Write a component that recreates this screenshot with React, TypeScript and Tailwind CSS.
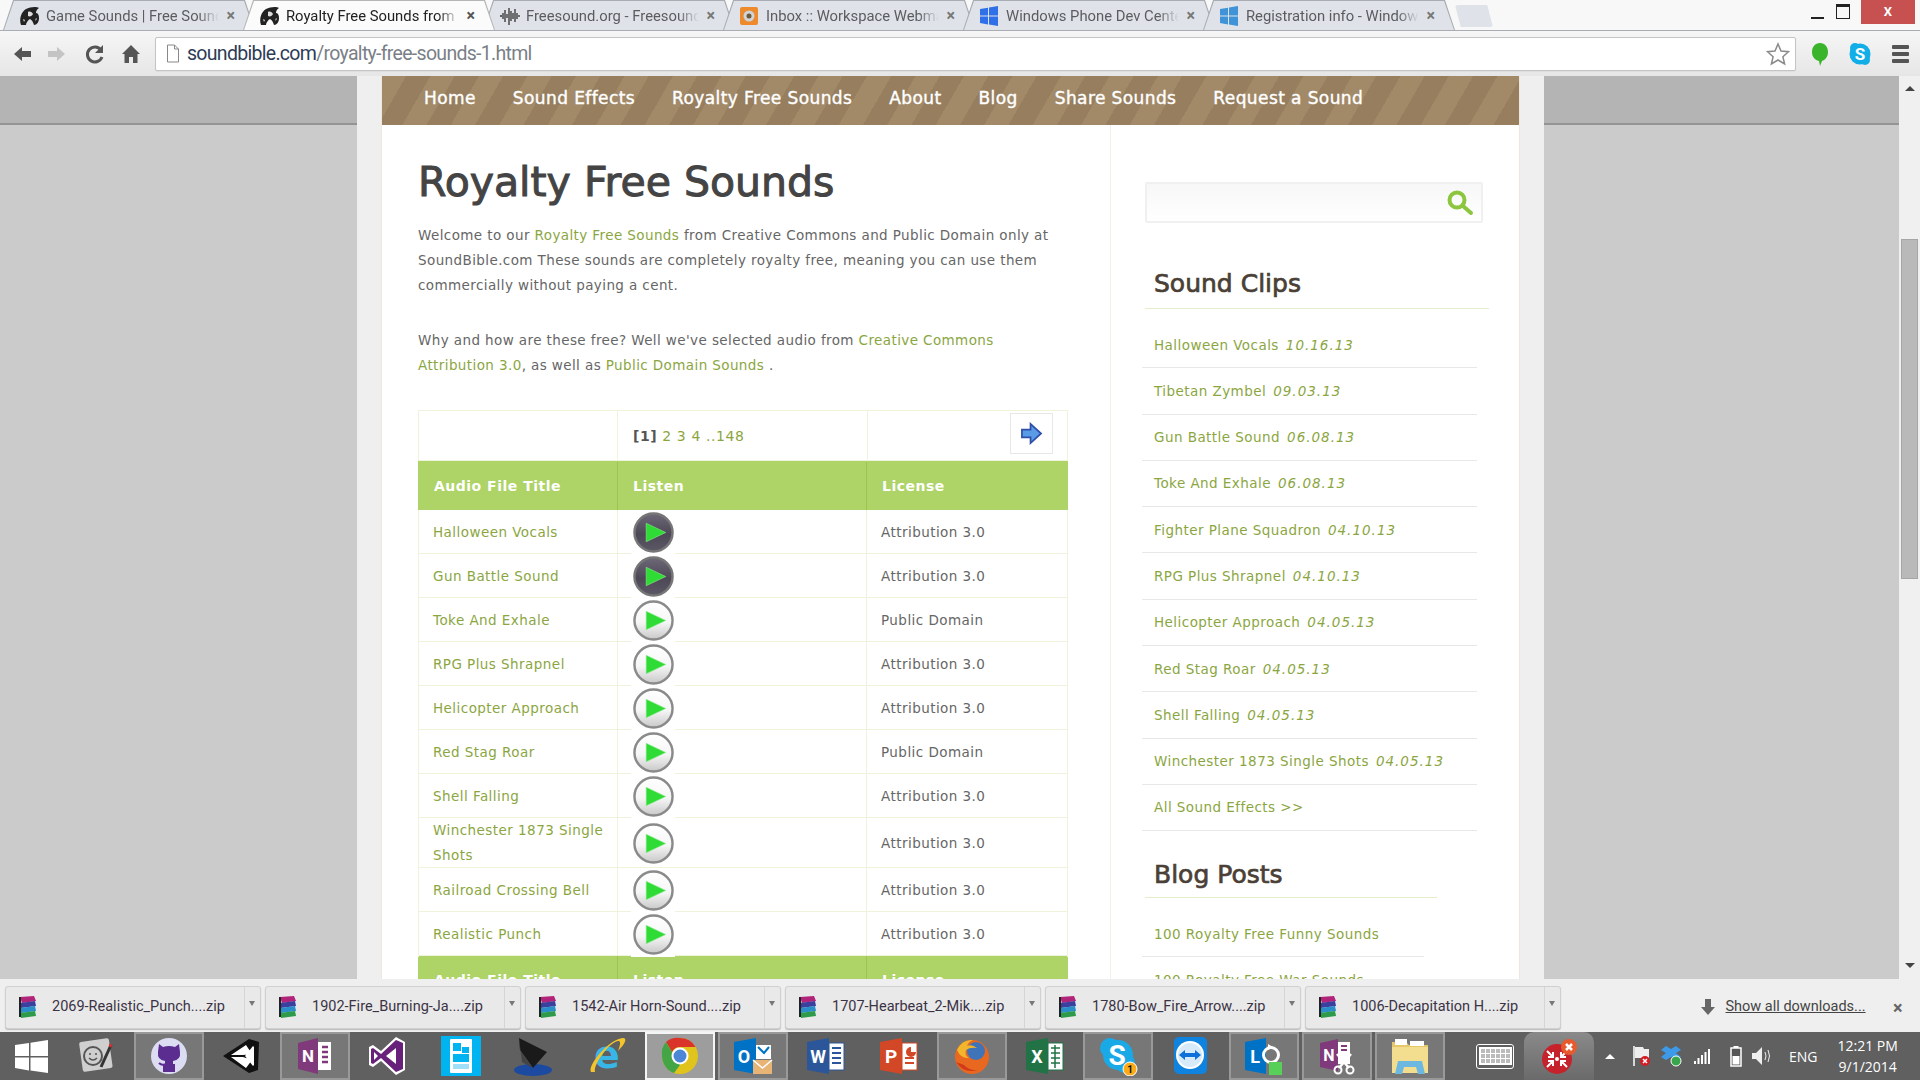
import React from "react";

const tabs = [
  { t: "Game Sounds | Free Sounds", ic: "sb" },
  { t: "Royalty Free Sounds from", ic: "sb", active: true },
  { t: "Freesound.org - Freesound", ic: "wave" },
  { t: "Inbox :: Workspace Webmail", ic: "mail" },
  { t: "Windows Phone Dev Center", ic: "win" },
  { t: "Registration info - Windows", ic: "win2" },
];

function TabIcon({ k }: { k: string }) {
  if (k === "sb")
    return (
      <svg width="22" height="22" viewBox="0 0 22 20">
        <path d="M2 19C0 13 2 6 7 3c4-2 10-3 13-1-2 1-3 3-3 5 2 0 3 2 3 5 0 4-2 7-5 7-1-3-2-5-4-6-2 1-4 4-4 6z" fill="#222" />
        <path d="M9 6c2-1 4 0 5 2-1 2-3 3-5 2zM4 13l2 1-1 2zM17 12l1 1-2 2z" fill="#ddd" />
      </svg>
    );
  if (k === "wave")
    return (
      <svg width="22" height="20" viewBox="0 0 22 20" stroke="#333" strokeWidth="1.3" fill="none">
        <path d="M1 10h2M4 7v6M6 4v12M8 8v4M10 2v17M12 5v10M14 7v6M16 3v13M18 7v6M20 9v2" />
      </svg>
    );
  if (k === "mail")
    return (
      <svg width="20" height="20" viewBox="0 0 20 20">
        <rect x="1" y="1" width="18" height="18" rx="2" fill="#ec8a2c" />
        <circle cx="10" cy="10" r="5.5" fill="#cfd3da" />
        <circle cx="10" cy="10" r="2.5" fill="#6b5a3a" />
      </svg>
    );
  const c = k === "win" ? "#2f6fe8" : "#3f93d6";
  return (
    <svg width="20" height="20" viewBox="0 0 20 20" fill={c}>
      <path d="M1 3l8-1.300V9.500H1zM10 1.500L19 0v9.500H10zM1 10.500h8v8L1 17zM10 10.500h9V20l-9-1.500z" />
    </svg>
  );
}

function Tab({ t, ic, active }: { t: string; ic: string; active?: boolean }) {
  return (
    <div className={`relative h-[30px] w-[252px] -mr-[12px] ${active ? "z-10" : ""}`}>
      <div className={`absolute inset-0 [clip-path:polygon(0_100%,10px_0,242px_0,252px_100%)] ${active ? "bg-[#b5b5b5]" : "bg-[#a9adb3]"}`}>
        <div className={`absolute inset-x-px top-px bottom-0 [clip-path:polygon(0_100%,10px_0,240px_0,250px_100%)] ${active ? "bg-[#fbfbfb]" : "bg-[#dfe3e9]"}`} />
      </div>
      <div className="relative flex h-[30px] items-center pl-[16px] pr-[20px] pt-[2px]">
        <span className="flex w-[27px] shrink-0"><TabIcon k={ic} /></span>
        <span className={`min-w-0 flex-1 overflow-hidden whitespace-nowrap text-[14.800px] [mask-image:linear-gradient(to_right,black_88%,transparent)] ${active ? "text-[#222]" : "text-[#5c5c60]"}`}>{t}</span>
        <span className={`ml-[8px] text-[16px] font-bold ${active ? "text-[#555]" : "text-[#777]"}`}>×</span>
      </div>
    </div>
  );
}

function TabStrip() {
  return (
    <div className="relative flex h-[31px] items-end bg-[#f8f8f8] pl-[3px] font-['Roboto',sans-serif] border-b border-[#a9adb3]">
      {tabs.map((x) => <Tab key={x.t} t={x.t} ic={x.ic} active={x.active} />)}
      <div className="ml-[12px] mb-[3px] h-[22px] w-[38px] rounded-[3px] bg-[#dfe3e9] [clip-path:polygon(0_0,85%_0,100%_100%,15%_100%)]" />
      <div className="ml-auto flex h-[24px] self-start">
        <div className="flex w-[33px] items-end justify-center pb-[5px]"><div className="h-[2px] w-[13px] bg-[#222]" /></div>
        <div className="flex w-[17px] items-start justify-center pt-[4px]">
          <div className="h-[15px] w-[14px] border border-[#222] border-t-[3px]" />
        </div>
        <div className="ml-[10px] mr-[5px] flex w-[54px] items-center justify-center bg-[#c75050] text-[13px] font-bold text-white">X</div>
      </div>
    </div>
  );
}

function Toolbar() {
  return (
    <div className="flex h-[45px] items-center bg-[linear-gradient(#f6f6f6,#e6e6e6)] font-['Roboto',sans-serif]">
      <div className="flex w-[155px] shrink-0 items-center pl-[11px]">
        <svg width="144" height="22" viewBox="0 0 144 22">
          <path d="M3 11l8-7v4h9v6h-9v4z" fill="#555" />
          <path d="M54 11l-8-7v4h-9v6h9v4z" fill="#c4c4c4" />
          <path d="M90 7a7.500 7.500 0 1 0 1 7" fill="none" stroke="#555" strokeWidth="3" />
          <path d="M92 2v8h-8z" fill="#555" />
          <path d="M111 11l9-9 9 9h-2.500v9H122v-6h-4v6h-4.500v-9z" fill="#555" />
        </svg>
      </div>
      <div className="flex h-[34px] w-[1641px] items-center rounded-[2px] border border-[#c4c4c4] bg-white pl-[10px] pr-[5px] shadow-[0_1px_1px_#ddd]">
        <svg width="14" height="19" viewBox="0 0 14 19" fill="#fff" stroke="#888"><path d="M1.500 1h7l4 4v13h-11zM8.500 1v4h4" /></svg>
        <span className="ml-[7px] text-[19.500px] leading-none tracking-[-0.7px] text-[#2d3b55]">soundbible.com<span className="text-[#7a7f87]">/royalty-free-sounds-1.html</span></span>
        <svg className="ml-auto" width="24" height="24" viewBox="0 0 24 24" fill="#fff" stroke="#8a8a8a" strokeWidth="1.500"><path d="M12 2l3 7 7.500.7-5.600 5 1.700 7.300L12 18l-6.600 4 1.700-7.300-5.600-5L9 9z" /></svg>
      </div>
      <svg className="ml-[14px]" width="20" height="26" viewBox="0 0 20 26"><path d="M10 2c5 0 8 4 8 9s-3 8-6 9l-2 5-1-5c-4-1-7-4-7-9s3-9 8-9z" fill="#3ab52b" /></svg>
      <svg className="ml-[18px]" width="24" height="26" viewBox="0 0 24 26">
        <circle cx="12" cy="13" r="10.500" fill="#12aee8" /><circle cx="7" cy="7" r="5" fill="#12aee8" /><circle cx="17" cy="19" r="5" fill="#12aee8" />
        <text x="12" y="19" textAnchor="middle" fontSize="17" fontWeight="700" fill="#fff" fontFamily="Roboto">S</text>
      </svg>
      <div className="ml-[20px] flex flex-col gap-[3px]">
        <div className="h-[4px] w-[17px] rounded-[1px] bg-[#555]" /><div className="h-[4px] w-[17px] rounded-[1px] bg-[#555]" /><div className="h-[4px] w-[17px] rounded-[1px] bg-[#555]" />
      </div>
    </div>
  );
}

const rows = [
  ["Halloween Vocals", "Attribution 3.0", true],
  ["Gun Battle Sound", "Attribution 3.0", true],
  ["Toke And Exhale", "Public Domain", false],
  ["RPG Plus Shrapnel", "Attribution 3.0", false],
  ["Helicopter Approach", "Attribution 3.0", false],
  ["Red Stag Roar", "Public Domain", false],
  ["Shell Falling", "Attribution 3.0", false],
  ["Winchester 1873 Single Shots", "Attribution 3.0", false],
  ["Railroad Crossing Bell", "Attribution 3.0", false],
  ["Realistic Punch", "Attribution 3.0", false],
] as const;

function Play({ dark, id }: { dark: boolean; id: string }) {
  return (
    <svg width="41" height="41" viewBox="0 0 42 42">
      <defs>
        <linearGradient id={id} x1="0" y1="0" x2="0" y2="1">
          <stop offset="0" stopColor={dark ? "#6e6878" : "#ffffff"} />
          <stop offset="0.55" stopColor={dark ? "#4d4856" : "#f6f6f6"} />
          <stop offset="1" stopColor={dark ? "#5d5866" : "#c8c8c8"} />
        </linearGradient>
      </defs>
      <circle cx="21" cy="21" r="19.500" fill={`url(#${id})`} stroke={dark ? "#767676" : "#8a8a8a"} strokeWidth="2.500" />
      <path d="M13.500 11.500l20 9.500-20 9.500z" fill="#2fdc36" stroke="#8fe88f" strokeWidth=".6" />
    </svg>
  );
}

function Table() {
  const line = "border-[#eef3dc]";
  const grid = "grid grid-cols-[200px_249px_201px]";
  return (
    <div className={`mt-[32px] w-[650px] border-t ${line}`}>
      <div className={`${grid} h-[50px] border-b ${line}`}>
        <div className={`border-l border-r ${line}`} />
        <div className="flex items-center gap-[5px] pl-[15px] pt-px text-[14px] tracking-[.6px] text-[#8ba63f]"><b className="text-[#555]">[1]</b> <span>2</span><span>3</span><span>4</span><span>..148</span></div>
        <div className={`relative border-l border-r ${line}`}>
          <div className="absolute right-[14px] top-[2px] flex h-[41px] w-[43px] items-center justify-center border border-[#e8e8e8] bg-white">
            <svg width="23" height="23" viewBox="0 0 24 24"><path d="M2 8h9V2l11 10-11 10v-6H2z" fill="#5a9be8" stroke="#2f4fa8" strokeWidth="1.800" /></svg>
          </div>
        </div>
      </div>
      <div className={`${grid} h-[49px] bg-[#aed366] pt-px text-[14px] font-bold tracking-[.5px] text-white`}>
        <div className="flex items-center border-r border-[#9cc452] pl-[16px]">Audio File Title</div>
        <div className="flex items-center border-r border-[#9cc452] pl-[15px]">Listen</div>
        <div className="flex items-center pl-[15px]">License</div>
      </div>
      {rows.map((r, i) => (
        <div key={r[0]} className={`${grid} ${r[0].length > 24 ? "h-[50px]" : "h-[44px]"} border-b ${line} text-[13.500px] tracking-[.45px]`}>
          <div className={`flex items-center border-l border-r ${line} pl-[14px] pr-[10px] leading-[25px] text-[#8ba63f]`}>{r[0]}</div>
          <div className={`flex items-center border-r ${line} pl-[13px]`}>
            <div className="relative z-10 flex h-[45px] w-[44px] items-center justify-center bg-white"><Play dark={r[2]} id={`pg${i}`} /></div>
          </div>
          <div className={`flex items-center border-r ${line} pl-[14px] text-[#666]`}>{r[1]}</div>
        </div>
      ))}
      <div className={`${grid} h-[49px] bg-[#aed366] text-[14px] font-bold tracking-[.5px] text-white`}>
        <div className="flex items-center border-r border-[#9cc452] pl-[16px]">Audio File Title</div>
        <div className="flex items-center border-r border-[#9cc452] pl-[15px]">Listen</div>
        <div className="flex items-center pl-[15px]">License</div>
      </div>
    </div>
  );
}

const clips = [
  ["Halloween Vocals", "10.16.13"],
  ["Tibetan Zymbel", "09.03.13"],
  ["Gun Battle Sound", "06.08.13"],
  ["Toke And Exhale", "06.08.13"],
  ["Fighter Plane Squadron", "04.10.13"],
  ["RPG Plus Shrapnel", "04.10.13"],
  ["Helicopter Approach", "04.05.13"],
  ["Red Stag Roar", "04.05.13"],
  ["Shell Falling", "04.05.13"],
  ["Winchester 1873 Single Shots", "04.05.13"],
  ["All Sound Effects >>", ""],
];

function Sidebar() {
  return (
    <div className="flex-1 pl-[31px] text-[13.500px] text-[#8ba63f]">
      <div className="ml-[3px] mt-[57px] flex h-[41px] w-[338px] items-center justify-end rounded-[2px] border-2 border-[#f0f0f0] bg-[linear-gradient(#f7f7f7,#fff)] pr-[6px]">
        <svg width="30" height="28" viewBox="0 0 30 28" fill="none" stroke="#8cc63f"><circle cx="12" cy="11" r="7.500" strokeWidth="4" /><path d="M18 17l8 7" strokeWidth="4" strokeLinecap="round" /></svg>
      </div>
      <div className="ml-[3px] mt-[40px] flex h-[46px] w-[344px] items-center border-b border-[#e4efc9] pb-[3px] pl-[9px] text-[25px] text-[#4a4036] [-webkit-text-stroke:0.7px_#4a4036]">Sound Clips</div>
      <div className="mt-[13px]">
        {clips.map((c) => (
          <div key={c[0]} className="flex h-[46.300px] w-[335px] items-center border-b border-[#e8e8e8] pl-[12px]">
            <span className="tracking-[.45px]">{c[0]}</span>
            {c[1] && <i className="ml-[7px] tracking-[1px]">{c[1]}</i>}
          </div>
        ))}
      </div>
      <div className="ml-[3px] mt-[20px] flex h-[47px] w-[292px] items-center border-b border-[#e4efc9] pl-[9px] text-[25px] text-[#4a4036] [-webkit-text-stroke:0.7px_#4a4036]">Blog Posts</div>
      <div className="mt-[14px] tracking-[.45px]">
        <div className="flex h-[45px] w-[282px] items-center border-b border-[#e8e8e8] pl-[12px]">100 Royalty Free Funny Sounds</div>
        <div className="flex h-[46px] w-[282px] items-center border-b border-[#e8e8e8] pl-[12px]">100 Royalty Free War Sounds</div>
      </div>
    </div>
  );
}

function Side() {
  return (
    <div className="flex-1">
      <div className="h-[49px] border-b-2 border-[#949494] bg-[#b4b4b4]" />
    </div>
  );
}

function Page() {
  return (
    <div className="flex h-[903px] overflow-hidden bg-[#cbcbcb] font-['DejaVu_Sans',sans-serif]">
      <div className="w-[357px]"><Side /></div>
      <div className="w-[1187px] shrink-0 bg-[#f0eff0] px-[24px]">
        <div className="h-full border-x border-[#eee6e0] bg-white">
          <div className="flex h-[49px] items-center gap-[37px] bg-[repeating-linear-gradient(120deg,#a28a69_0,#a28a69_21px,#967e5e_21px,#967e5e_42px)] pb-[4px] pl-[42px] text-[17px] tracking-[.4px] text-white [-webkit-text-stroke:0.4px_#fff]">
            {["Home", "Sound Effects", "Royalty Free Sounds", "About", "Blog", "Share Sounds", "Request a Sound"].map((n) => <span key={n}>{n}</span>)}
          </div>
          <div className="flex">
            <div className="w-[729px] shrink-0 border-r border-[#f3f0ea] pl-[36px]">
              <h1 className="mt-[29px] text-[41px] font-normal leading-[56px] text-[#444] [-webkit-text-stroke:1px_#444]">Royalty Free Sounds</h1>
              <p className="mt-[13px] w-[650px] text-[13.500px] leading-[25px] tracking-[.4px] text-[#666]">
                Welcome to our <span className="text-[#8ba63f]">Royalty Free Sounds</span> from Creative Commons and Public Domain only at SoundBible.com These sounds are completely royalty free, meaning you can use them commercially without paying a cent.
              </p>
              <p className="mt-[30px] w-[650px] text-[13.500px] leading-[25px] tracking-[.4px] text-[#666]">
                Why and how are these free? Well we've selected audio from <span className="text-[#8ba63f]">Creative Commons Attribution 3.0</span>, as well as <span className="text-[#8ba63f]">Public Domain Sounds</span> .
              </p>
              <Table />
            </div>
            <Sidebar />
          </div>
        </div>
      </div>
      <div className="w-[355px]"><Side /></div>
      <div className="flex w-[21px] shrink-0 flex-col items-center bg-[#f0f0f0]">
        <div className="mt-[10px] h-0 w-0 border-x-[5px] border-b-[5px] border-x-transparent border-b-[#444]" />
        <div className="mt-[148px] h-[340px] w-[17px] border border-[#a6a6a6] bg-[#b9b9b9]" />
        <div className="mt-[384px] h-0 w-0 border-x-[5px] border-t-[5px] border-x-transparent border-t-[#444]" />
      </div>
    </div>
  );
}

const downloads = ["2069-Realistic_Punch....zip", "1902-Fire_Burning-Ja....zip", "1542-Air Horn-Sound....zip", "1707-Hearbeat_2-Mik....zip", "1780-Bow_Fire_Arrow....zip", "1006-Decapitation H....zip"];

function Rar() {
  return (
    <svg width="24" height="24" viewBox="0 0 24 24">
      <path d="M4 2l14-1 2 5-14 2z" fill="#b2247a" />
      <path d="M4 8l15-2 1 5-15 2z" fill="#3b3f9e" />
      <path d="M4 13l15-2 1 5-15 2z" fill="#2a8fc9" />
      <path d="M4 18l15-2 1 5-15 2z" fill="#2d9b4a" />
      <path d="M4 2v20" stroke="#222" strokeWidth="2" />
    </svg>
  );
}

function Downloads() {
  return (
    <div className="flex h-[53px] items-center gap-[4.500px] bg-[#efefef] pl-[5px] pt-[3px] font-['Roboto',sans-serif] text-[14.500px] text-[#3b3345]">
      {downloads.map((d) => (
        <div key={d} className="flex h-[43px] w-[255.500px] items-center rounded-[3px] border border-[#d0d0d0] bg-[#e9e9e9] shadow-[0_1px_1px_#bbb]">
          <span className="ml-[10px] mr-[12px] flex"><Rar /></span>
          <span className="flex-1 whitespace-nowrap">{d}</span>
          <div className="flex h-full w-[16px] justify-center border-l border-[#d5d5d5] pt-[14px]">
            <div className="h-0 w-0 border-x-[3.500px] border-t-[5px] border-x-transparent border-t-[#777]" />
          </div>
        </div>
      ))}
      <svg className="ml-[135px]" width="16" height="18" viewBox="0 0 16 18"><path d="M5 1h6v8h4l-7 8-7-8h4z" fill="#666" /></svg>
      <span className="ml-[5px] underline text-[14.500px] text-[#444]">Show all downloads...</span>
      <span className="ml-[23px] text-[18px] font-bold text-[#666]">×</span>
    </div>
  );
}

const T = "Roboto";
const icons: React.ReactNode[] = [
  <svg key="0" width="40" height="40" viewBox="0 0 40 40"><rect x="5" y="4" width="30" height="30" rx="2" transform="rotate(-8 20 20)" fill="#cfcfcf" /><circle cx="17" cy="20" r="9" fill="none" stroke="#555" strokeWidth="2" /><circle cx="14" cy="18" r="1" fill="#555" /><circle cx="20" cy="18" r="1" fill="#555" /><path d="M13 22q4 4 8 0" fill="none" stroke="#555" strokeWidth="1.500" /><path d="M35 9L25 31" stroke="#333" strokeWidth="3" /><path d="M34 11l1-3" stroke="#c33" strokeWidth="3" /></svg>,
  <svg key="1" width="40" height="40" viewBox="0 0 40 40"><circle cx="20" cy="20" r="18" fill="#dcdcf2" /><path d="M10 8l4 3q6-2 12 0l4-3 1 8q1 8-7 9v3h2v8h-12v-8h2v-3q-8-1-7-9z" fill="#5c2d91" /><path d="M10 27q3 3 6 1" stroke="#5c2d91" strokeWidth="2" fill="none" /></svg>,
  <svg key="2" width="40" height="40" viewBox="0 0 40 40"><path d="M1 20L27 3l10 3-1 28-9 3z" fill="#111" /><path d="M9 19L24 9l6 9-9 1zM9 21l12 0 9 3-6 8zM23 20l8-10 1 1v18l-1 1z" fill="#fff" /></svg>,
  <svg key="3" width="40" height="40" viewBox="0 0 40 40"><path d="M3 7l20-5v36L3 33z" fill="#80397b" /><rect x="23" y="6" width="13" height="28" fill="#fff" /><path d="M27 11h6M27 16h6M27 21h6M27 26h6" stroke="#80397b" strokeWidth="2.500" /><text x="13" y="26" textAnchor="middle" fontFamily={T} fontWeight="700" fontSize="17" fill="#fff">N</text></svg>,
  <svg key="4" width="40" height="40" viewBox="0 0 40 40"><path d="M28 1l9 5v28l-9 5-15-14-8 6-4-2V11l4-2 8 6z" fill="#fff" /><path d="M28 4l7 3v26l-7 3-15-14-8 6-2-1V13l2-1 8 6zM28 12l-10 8 10 8z" fill="#68217a" fillRule="evenodd" /><path d="M6 16v8l4-4z" fill="#fff" /></svg>,
  <svg key="5" width="40" height="40" viewBox="0 0 40 40"><rect x="0" y="0" width="40" height="40" fill="#00b4f1" /><rect x="9" y="3" width="22" height="34" rx="1" fill="#fff" /><rect x="12" y="7" width="8" height="8" fill="#00b4f1" /><rect x="21" y="11" width="7" height="6" fill="#00b4f1" /><rect x="12" y="18" width="16" height="8" fill="#00b4f1" /><rect x="12" y="28" width="16" height="5" fill="#9fdff7" /></svg>,
  <svg key="6" width="40" height="40" viewBox="0 0 40 40"><ellipse cx="19" cy="34" rx="19" ry="6" fill="#1c4aa0" /><path d="M5 2l28 14-14 16L6 14z" fill="#1a1a1a" /><path d="M5 2l3 24 11 6L6 14z" fill="#444" /></svg>,
  <svg key="7" width="40" height="40" viewBox="0 0 40 40"><text x="20" y="32" textAnchor="middle" fontFamily="DejaVu Sans" fontWeight="700" fontSize="38" fill="#39b6e8">e</text><path d="M4 36C0 30 22 2 37 2c4 2-2 9-6 13 2-5 3-9 1-10C24 4 6 28 8 36z" fill="#f3c52b" /></svg>,
  <svg key="8" width="40" height="40" viewBox="0 0 40 40"><circle cx="20" cy="20" r="18" fill="#e0c41c" /><path d="M20 2a18 18 0 0 1 15.600 9H20a9 9 0 0 0-8 5L6 6a18 18 0 0 1 14-4z" fill="#d9332a" /><path d="M2 20A18 18 0 0 1 6 6l9 15 5 8-6 8A18 18 0 0 1 2 20z" fill="#44a546" /><circle cx="20" cy="20" r="8.500" fill="#fff" /><circle cx="20" cy="20" r="6.500" fill="#4b87d6" /></svg>,
  <svg key="9" width="40" height="40" viewBox="0 0 40 40"><path d="M1 6l22-4v36L1 34z" fill="#0072c6" /><rect x="23" y="9" width="15" height="14" fill="#fff" /><path d="M25 11l6 6 5-6" fill="none" stroke="#0072c6" strokeWidth="2" /><text x="11" y="27" textAnchor="middle" fontFamily={T} fontWeight="700" fontSize="18" fill="#fff">O</text><rect x="20" y="24" width="19" height="14" fill="#e8b475" /><path d="M20 24l9.500 8 9.500-8" fill="none" stroke="#fff" strokeWidth="1.500" /></svg>,
  <svg key="10" width="40" height="40" viewBox="0 0 40 40"><path d="M1 6l22-4v36L1 34z" fill="#2b579a" /><rect x="23" y="7" width="15" height="27" fill="#fff" stroke="#2b579a" /><path d="M26 12h9M26 17h9M26 22h9M26 27h9" stroke="#2b579a" strokeWidth="2" /><text x="12" y="27" textAnchor="middle" fontFamily={T} fontWeight="700" fontSize="18" fill="#fff">W</text></svg>,
  <svg key="11" width="40" height="40" viewBox="0 0 40 40"><path d="M1 6l22-4v36L1 34z" fill="#d24726" /><rect x="23" y="7" width="15" height="27" fill="#fff" stroke="#d24726" /><path d="M26 22h9M26 27h9" stroke="#d24726" strokeWidth="2" /><path d="M27 16a5 5 0 0 1 5-5v5h5a5 5 0 0 1-10 0z" fill="#d24726" /><text x="12" y="27" textAnchor="middle" fontFamily={T} fontWeight="700" fontSize="19" fill="#fff">P</text></svg>,
  <svg key="12" width="40" height="40" viewBox="0 0 40 40"><circle cx="20" cy="21" r="17" fill="#e8681f" /><ellipse cx="24" cy="15" rx="9" ry="9" fill="#3f74b8" /><path d="M5 14Q10 3 21 4q-5 2-6 6 5-2 10 2-7-1-11 2-2 5 3 8-8 1-12-8z" fill="#f3b52b" /><path d="M4 26q8 12 22 8-9 1-14-5z" fill="#d2391b" /></svg>,
  <svg key="13" width="40" height="40" viewBox="0 0 40 40"><path d="M1 6l22-4v36L1 34z" fill="#217346" /><rect x="23" y="7" width="15" height="27" fill="#fff" stroke="#217346" /><path d="M26 12h9M26 17h9M26 22h9M26 27h9M30 9v23" stroke="#217346" strokeWidth="1.500" /><text x="12" y="27" textAnchor="middle" fontFamily={T} fontWeight="700" fontSize="18" fill="#fff">X</text></svg>,
  <svg key="14" width="40" height="40" viewBox="0 0 40 40"><circle cx="20" cy="19" r="15" fill="#19a9e6" /><circle cx="12" cy="12" r="10" fill="#19a9e6" /><circle cx="27" cy="27" r="10" fill="#19a9e6" /><text x="19" y="29" textAnchor="middle" fontFamily={T} fontWeight="700" fontSize="28" fill="#fff">S</text><circle cx="32" cy="33" r="7" fill="#fbab18" stroke="#fff" /><text x="32" y="37" textAnchor="middle" fontFamily={T} fontWeight="700" fontSize="10" fill="#111">1</text></svg>,
  <svg key="15" width="40" height="40" viewBox="0 0 40 40"><rect x="3" y="1" width="33" height="37" rx="5" fill="#0e84e0" /><circle cx="19" cy="19" r="14" fill="#fff" /><circle cx="19" cy="19" r="12" fill="#d6eafa" /><path d="M8 19l6-5v3h10v-3l6 5-6 5v-3H14v3z" fill="#0e70d8" /></svg>,
  <svg key="16" width="40" height="40" viewBox="0 0 40 40"><path d="M1 6l21-4v36L1 34z" fill="#0072c6" /><text x="11" y="27" textAnchor="middle" fontFamily={T} fontWeight="700" fontSize="18" fill="#fff">L</text><circle cx="27" cy="19" r="7.500" fill="none" stroke="#fff" strokeWidth="3" /><path d="M24 8l5 3-5 3z" fill="#fff" /><rect x="25" y="26" width="13" height="13" fill="#58cf58" /></svg>,
  <svg key="17" width="40" height="40" viewBox="0 0 40 40"><path d="M3 7l18-4v32L3 31z" fill="#80397b" /><rect x="21" y="6" width="12" height="22" fill="#fff" /><path d="M24 10h6M24 14h6" stroke="#80397b" strokeWidth="2" /><text x="12" y="25" textAnchor="middle" fontFamily={T} fontWeight="700" fontSize="16" fill="#fff">N</text><path d="M20 18l12 14M34 18L22 32" stroke="#fff" strokeWidth="2.500" /><circle cx="21" cy="34" r="3.500" fill="none" stroke="#fff" strokeWidth="2" /><circle cx="33" cy="34" r="3.500" fill="none" stroke="#fff" strokeWidth="2" /></svg>,
  <svg key="18" width="40" height="40" viewBox="0 0 40 40"><path d="M2 6h14l3 3h19v26H2z" fill="#e6c76a" /><rect x="5" y="3" width="12" height="6" fill="#fff" /><rect x="20" y="5" width="14" height="5" fill="#fff" /><rect x="2" y="11" width="36" height="26" fill="#f3dd8f" /><path d="M5 38l3-13h24l3 13h-7l-2-7H14l-2 7z" fill="#6cb8e0" /></svg>,
];

const onTiles = new Set([1, 3, 9, 12, 14, 16, 17, 18]);

function Taskbar() {
  return (
    <div className="flex h-[48px] items-center bg-[#606060] font-['Open_Sans',sans-serif] text-white">
      <div className="flex w-[61px] shrink-0 justify-center pl-[2px]">
        <svg width="33" height="35" viewBox="0 0 33 35" fill="#fff"><path d="M0 6l14-2v13H0zM15.500 3.700L33 1v16H15.500zM0 18.500h14v13L0 29zM15.500 18.500H33V34l-17.500-2.500z" /></svg>
      </div>
      <div className="flex gap-[3px]">
        {icons.map((ic, i) => (
          <div key={i} className={`flex h-[48px] w-[70px] items-center justify-center ${i === 8 ? "border-2 border-white/90 bg-[#9d9d9d]" : onTiles.has(i) ? "border-2 border-white/25 bg-[#777]" : ""}`}>
            {ic}
          </div>
        ))}
      </div>
      <div className="ml-[31px] flex h-[25px] w-[38px] items-center justify-center rounded-[3px] border border-white">
        <div className="grid grid-cols-6 gap-[1px] bg-white p-[2px]">
          {Array.from({ length: 18 }).map((_, i) => <div key={i} className="h-[4px] w-[4px] bg-[#bbb]" />)}
        </div>
      </div>
      <div className="ml-[10px] flex h-[48px] w-[70px] items-center justify-center rounded-t-[10px] bg-[linear-gradient(#8a8a8a,#6a6a6a)]">
        <svg width="38" height="38" viewBox="0 0 38 38">
          <circle cx="17" cy="22" r="15" fill="#c6222b" />
          <circle cx="17" cy="22" r="2" fill="#fff" />
          <path d="M7 14l6 6M27 14l-6 6M7 30l6-6M27 30l-6-6M8 20h5v-5M26 20h-5v-5M8 24h5v5M26 24h-5v5" stroke="#fff" strokeWidth="2" fill="none" />
          <circle cx="29" cy="10" r="8" fill="#e65a2d" />
          <path d="M26 7l6 6M32 7l-6 6" stroke="#fff" strokeWidth="2.500" />
        </svg>
      </div>
      <div className="ml-[11px] h-0 w-0 border-x-[5px] border-b-[5px] border-x-transparent border-b-white" />
      <svg className="ml-[17px]" width="20" height="22" viewBox="0 0 20 22"><path d="M2 1v20" stroke="#fff" strokeWidth="1.500" /><path d="M3 2h8l1 2h5v9H3z" fill="#eee" /><circle cx="13" cy="16" r="5" fill="#d21d25" /><path d="M11 14l4 4M15 14l-4 4" stroke="#fff" strokeWidth="1.500" /></svg>
      <svg className="ml-[9px]" width="21" height="22" viewBox="0 0 21 22"><path d="M5 1l5 3 5-3 5 4-5 3 5 4-5 3-5-3-5 3-5-3 5-4-5-3z" fill="#3d9ae8" /><circle cx="15" cy="16" r="5" fill="#3aa64b" stroke="#fff" /></svg>
      <svg className="ml-[12px]" width="16" height="16" viewBox="0 0 16 16" fill="#fff"><path d="M0 13h2v3H0zM3.500 10h2v6h-2zM7 7h2v9H7zM10.500 4h2v12h-2zM14 1h2v15h-2z" /></svg>
      <svg className="ml-[20px]" width="12" height="21" viewBox="0 0 12 21"><rect x="3.500" y="0" width="5" height="2" fill="#fff" /><rect x="1" y="2" width="10" height="18" fill="#555" stroke="#fff" strokeWidth="1.500" /><rect x="2.500" y="10" width="7" height="8.500" fill="#fff" /></svg>
      <svg className="ml-[10px]" width="20" height="20" viewBox="0 0 20 20"><path d="M0 7h4l6-6v18l-6-6H0z" fill="#eee" /><path d="M13 6q2 4 0 8M16 4q3 6 0 12" stroke="#eee" fill="none" /></svg>
      <span className="ml-[17px] text-[14px]">ENG</span>
      <div className="ml-[20px] flex flex-col items-center text-[14px] leading-[21px]">
        <span>12:21 PM</span>
        <span>9/1/2014</span>
      </div>
    </div>
  );
}

export default function App() {
  return (
    <div className="flex h-[1080px] w-[1920px] flex-col overflow-hidden">
      <TabStrip />
      <Toolbar />
      <Page />
      <Downloads />
      <Taskbar />
    </div>
  );
}
